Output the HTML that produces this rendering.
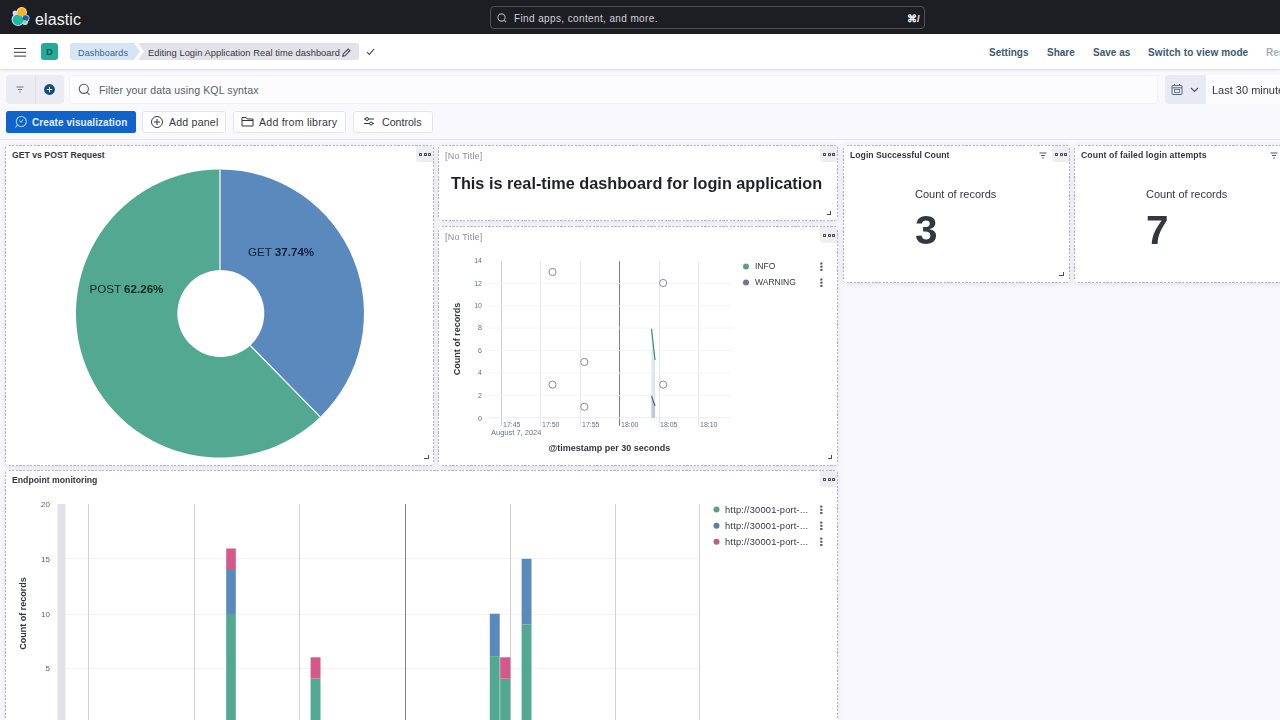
<!DOCTYPE html>
<html><head><meta charset="utf-8">
<style>
*{box-sizing:border-box;margin:0;padding:0}
html,body{width:1280px;height:720px;overflow:hidden;background:#f9f8fd;font-family:"Liberation Sans",sans-serif;color:#343741}
.abs{position:absolute;white-space:nowrap}
#top{position:absolute;left:0;top:0;width:1280px;height:34px;background:#1d1e24}
#nav{position:absolute;left:0;top:34px;width:1280px;height:35px;background:#fff;box-shadow:0 1px 2px rgba(60,60,90,.18)}
.navlink{position:absolute;top:1px;line-height:35px;font-size:10px;font-weight:bold;color:#3a5a72}
.btn{position:absolute;top:111px;height:22px;border:1px solid #e3e5ec;background:#fff;border-radius:3px;font-size:10.6px;line-height:20px;color:#343741}
.panel{position:absolute;background-color:#fff;border:1px solid transparent;border-radius:4px;box-shadow:0 1px 5px rgba(70,65,130,.13);
background-image:repeating-linear-gradient(90deg,#b5b4c5 0 2.2px,transparent 2.2px 3.6px),repeating-linear-gradient(90deg,#b5b4c5 0 2.2px,transparent 2.2px 3.6px),repeating-linear-gradient(0deg,#b5b4c5 0 2.2px,transparent 2.2px 3.6px),repeating-linear-gradient(0deg,#b5b4c5 0 2.2px,transparent 2.2px 3.6px);
background-size:100% 1px,100% 1px,1px 100%,1px 100%;background-position:left top,left bottom,left top,right top;background-repeat:no-repeat;background-origin:border-box;background-clip:border-box}
.ptitle{position:absolute;left:6px;top:2.5px;font-size:8.7px;line-height:12px;font-weight:bold;color:#343741}
.notitle{position:absolute;left:6px;top:4px;font-size:9px;letter-spacing:.2px;line-height:12px;color:#8a8e96}
.dots{position:absolute;width:17px;height:16px;background:#eeeef2;border-radius:0 3px 0 3px}
.dots i{position:absolute;top:6.7px;width:3px;height:3px;border:1px solid #4a4e58;border-radius:.6px}
.rsz{position:absolute;width:4.5px;height:4px;border-right:1.2px solid #4a4e58;border-bottom:1.2px solid #4a4e58}
svg text{font-family:"Liberation Sans",sans-serif}
</style></head><body>
<div id="top">
  <svg class="abs" style="left:10px;top:6px" width="22" height="22" viewBox="0 0 22 22">
    <circle cx="8" cy="13.5" r="6.4" fill="#cfeff0"/>
    <circle cx="11.7" cy="6.3" r="5.2" fill="#f6e7b0"/>
    <circle cx="15.7" cy="12.2" r="3.8" fill="#bcd6f0"/>
    <circle cx="15" cy="16" r="3" fill="#cdeedd"/>
    <circle cx="5.2" cy="7" r="2.6" fill="#e6d3ea"/>
    <circle cx="8" cy="13.8" r="5.4" fill="#20b6a8"/>
    <circle cx="11.7" cy="6.3" r="4.3" fill="#f3b61f"/>
    <circle cx="15.7" cy="12.2" r="2.9" fill="#1f5fa6"/>
    <circle cx="15" cy="16" r="2" fill="#8fd4a6"/>
  </svg>
  <div class="abs" style="left:35px;top:10.5px;font-size:16px;line-height:18px;color:#f4f4f6;letter-spacing:0.1px">elastic</div>
  <div class="abs" style="left:490px;top:6px;width:435px;height:23px;border:1px solid #4d4f58;border-radius:4px;background:#1d1e24">
    <svg class="abs" style="left:5px;top:5px" width="12" height="12" viewBox="0 0 12 12"><circle cx="5.5" cy="5.5" r="3.6" fill="none" stroke="#a7a9b1" stroke-width="1.1"/><path d="M8 8 10 10.2" stroke="#a7a9b1" stroke-width="1.1"/></svg>
    <div class="abs" style="left:23px;top:6px;font-size:10px;line-height:12px;letter-spacing:.38px;color:#d2d3d8">Find apps, content, and more.</div>
    <div class="abs" style="left:416px;top:6px;font-size:9.5px;line-height:12px;color:#fff;font-weight:bold">&#8984;/</div>
  </div>
</div>
<div id="nav">
  <div class="abs" style="left:14px;top:13.6px;width:12px;height:1.3px;background:#343741;box-shadow:0 3.8px 0 #343741,0 7.6px 0 #343741"></div>
  <div class="abs" style="left:41px;top:9px;width:17px;height:17px;background:#21ab99;border-radius:3px;font-size:9px;font-weight:bold;line-height:18px;text-align:center;color:#0d4a4a">D</div>
  <svg class="abs" style="left:70px;top:9px" width="290" height="17" viewBox="0 0 290 17">
    <path d="M3 0H64L70 8.5 64 17H3Q0 17 0 14V3Q0 0 3 0Z" fill="#d6e5f5"/>
    <path d="M68 0H286Q289 0 289 3V14Q289 17 286 17H68L74 8.5Z" fill="#e2e2e8"/>
  </svg>
  <div class="abs" style="left:78px;top:13.5px;font-size:9px;line-height:11px;letter-spacing:.15px;color:#2e6491">Dashboards</div>
  <div class="abs" style="left:148px;top:13.5px;font-size:9.3px;line-height:11px;letter-spacing:.05px;color:#343741">Editing Login Application Real time dashboard</div>
  <svg class="abs" style="left:341.5px;top:47.5px;position:fixed" width="9" height="9" viewBox="0 0 9 9"><path d="M0.8 8.2 1.3 5.9 6.2 1 8 2.8 3.1 7.7Z" fill="none" stroke="#535966" stroke-width="1.2"/><path d="M5 2.2 6.8 4" stroke="#535966" stroke-width="1"/></svg>
  <svg class="abs" style="left:366px;top:14px" width="9" height="8" viewBox="0 0 9 8"><path d="M1 4 3.3 6.5 8 1" fill="none" stroke="#343741" stroke-width="1.1"/></svg>
  <div class="navlink" style="left:989px">Settings</div>
  <div class="navlink" style="left:1047px">Share</div>
  <div class="navlink" style="left:1093px">Save as</div>
  <div class="navlink" style="left:1148px;letter-spacing:.1px">Switch to view mode</div>
  <div class="navlink" style="left:1266px;color:#a9adb5">Res</div>
</div>
<!-- filter bar -->
<div class="abs" style="left:6px;top:75px;width:58px;height:29px;background:#ebecf3;border-radius:3px"></div>
<div class="abs" style="left:35px;top:75px;width:1px;height:29px;background:#e0e2ea"></div>
<svg class="abs" style="left:15px;top:86px" width="10" height="7" viewBox="0 0 10 7"><path d="M1.5 1H8.5M3 3.5H7M4.3 6H5.7" stroke="#69707d" stroke-width="1"/></svg>
<svg class="abs" style="left:43px;top:83px" width="13" height="13" viewBox="0 0 13 13"><circle cx="6.5" cy="6.5" r="5.4" fill="#124b82"/><path d="M6.5 3.8V9.2M3.8 6.5H9.2" stroke="#e8f0ff" stroke-width="1.1"/></svg>
<div class="abs" style="left:69px;top:75px;width:1089px;height:29px;background:#fcfbfe;border:1px solid #f2f1f7;border-radius:3px"></div>
<svg class="abs" style="left:78px;top:83px" width="13" height="13" viewBox="0 0 13 13"><circle cx="5.8" cy="5.8" r="4.6" fill="none" stroke="#535966" stroke-width="1.1"/><path d="M9 9.2 11.5 11.8" stroke="#535966" stroke-width="1.1"/></svg>
<div class="abs" style="left:99px;top:84px;font-size:10.6px;line-height:12px;letter-spacing:.1px;color:#5a5f6b">Filter your data using KQL syntax</div>
<div class="abs" style="left:1165px;top:75px;width:41px;height:29px;background:#e9e9f3;border-radius:4px 0 0 4px"></div>
<svg class="abs" style="left:1171px;top:84px" width="12" height="11" viewBox="0 0 12 11"><rect x="1" y="1.5" width="10" height="9" rx="1" fill="none" stroke="#4a6a8a" stroke-width="1"/><path d="M1 3.8H11M3.5 0V2M8.5 0V2" stroke="#4a6a8a" stroke-width="1"/><rect x="3.5" y="5.5" width="5" height="3" fill="none" stroke="#4a6a8a" stroke-width=".8"/></svg>
<svg class="abs" style="left:1190px;top:87px" width="9" height="6" viewBox="0 0 9 6"><path d="M1 1 4.5 4.5 8 1" fill="none" stroke="#4e5564" stroke-width="1.2"/></svg>
<div class="abs" style="left:1206px;top:75px;width:74px;height:29px;background:#fcfbfe"></div>
<div class="abs" style="left:1212px;top:84px;font-size:11px;line-height:12px;color:#343741">Last 30 minutes</div>
<!-- buttons -->
<div class="abs" style="left:6px;top:111px;width:130px;height:22px;background:#1063c8;border-radius:2.5px;color:#e3efff;font-size:10px;font-weight:bold;line-height:23px;letter-spacing:.07px;padding-left:26px">Create visualization</div>
<svg class="abs" style="left:14px;top:115px" width="14" height="14" viewBox="0 0 14 14"><circle cx="7.3" cy="6.5" r="5" fill="none" stroke="#a9d2ff" stroke-width="1.1"/><path d="M3.5 10 1.5 12.5" stroke="#a9d2ff" stroke-width="1.1"/><path d="M5.5 5.5 7 7.5 9 4.5" fill="none" stroke="#a9d2ff" stroke-width="1"/></svg>
<div class="btn" style="left:142px;width:84px;padding-left:26px;letter-spacing:.2px">Add panel</div>
<svg class="abs" style="left:150px;top:115px" width="14" height="14" viewBox="0 0 14 14"><circle cx="7" cy="7" r="5.5" fill="none" stroke="#343741" stroke-width="1"/><path d="M7 4V10M4 7H10" stroke="#343741" stroke-width="1"/></svg>
<div class="btn" style="left:233px;width:113px;padding-left:25px;letter-spacing:.22px">Add from library</div>
<svg class="abs" style="left:241px;top:116px" width="13" height="11" viewBox="0 0 13 11"><path d="M1 1.5H5L6.2 3H12V10H1Z" fill="none" stroke="#343741" stroke-width="1"/><path d="M1 4.5H12" stroke="#343741" stroke-width="1"/></svg>
<div class="btn" style="left:353px;width:80px;padding-left:28px">Controls</div>
<svg class="abs" style="left:363px;top:116px" width="12" height="11" viewBox="0 0 12 11"><path d="M1 3H11M1 7.5H11" stroke="#343741" stroke-width="1"/><circle cx="4" cy="3" r="1.5" fill="#fff" stroke="#343741"/><circle cx="8" cy="7.5" r="1.5" fill="#fff" stroke="#343741"/></svg>
<div class="abs" style="left:0;top:139px;width:1280px;height:1px;background:#e4e2ee"></div>

<!-- panel 1 -->
<div class="panel" style="left:5px;top:145px;width:429px;height:321px">
  <div class="ptitle">GET vs POST Request</div>
  <div class="dots" style="right:0;top:0"><i style="left:3px"></i><i style="left:7.5px"></i><i style="left:12px"></i></div>
  <div class="rsz" style="left:418px;top:309px"></div>
</div>
<svg class="abs" style="left:0;top:140px" width="440" height="330" viewBox="0 140 440 330">
  <path d="M220 169.5A144 144 0 0 1 320.2 416.9L250.3 345.5A43.5 43.5 0 0 0 220 270Z" fill="#5a89bd"/>
  <path d="M320.2 416.9A144 144 0 1 1 220 169.5V270A43.5 43.5 0 1 0 250.3 345.5Z" fill="#52a891"/>
  <path d="M220 169.5V270M250.3 345.5 320.2 416.9" stroke="#fff" stroke-width="1.2"/>
  <text x="248" y="256" font-size="11.6" fill="#14213a">GET <tspan font-weight="bold">37.74%</tspan></text>
  <text x="89.5" y="293" font-size="11.6" fill="#0e2a22">POST <tspan font-weight="bold">62.26%</tspan></text>
</svg>

<!-- panel 2 -->
<div class="panel" style="left:438px;top:145px;width:400px;height:76px">
  <div class="notitle">[No Title]</div>
  <div class="dots" style="right:0;top:0"><i style="left:3px"></i><i style="left:7.5px"></i><i style="left:12px"></i></div>
  <div class="abs" style="left:12px;top:28px;font-size:16.25px;line-height:18px;font-weight:bold;color:#1f2126">This is real-time dashboard for login application</div>
  <div class="rsz" style="left:387.5px;top:65px"></div>
</div>
<!-- panel 3 -->
<div class="panel" style="left:438px;top:226px;width:400px;height:240px">
  <div class="notitle">[No Title]</div>
  <div class="dots" style="right:0;top:0"><i style="left:3px"></i><i style="left:7.5px"></i><i style="left:12px"></i></div>
  <div class="rsz" style="left:388.5px;top:228px"></div>
</div>
<svg class="abs" style="left:440px;top:240px" width="396" height="222" viewBox="440 240 396 222">
  <g stroke="#e6e6ea" stroke-width="1">
    <path d="M540.5 261V426M580.5 261V426M659.5 261V426M698.5 261V426"/></g><path d="M501.5 261V426" stroke="#cbcbd0"/><g>
  </g>
  <path d="M619.5 261V426" stroke="#7d7f86" stroke-width="1"/>
  <path d="M489 395.5H731M489 373H731M489 350.5H731M489 328H731M489 306H731M489 283.5H731" stroke="#f4f4f7" stroke-width="1"/><path d="M489 417.8H731" stroke="#ececf0" stroke-width="1"/>
  <g font-size="7" fill="#69707d" text-anchor="end">
    <text x="482" y="263">14</text><text x="482" y="285.5">12</text><text x="482" y="308">10</text><text x="482" y="330.3">8</text>
    <text x="482" y="352.7">6</text><text x="482" y="375">4</text><text x="482" y="398">2</text><text x="482" y="420.5">0</text>
  </g>
  <g font-size="7" fill="#69707d">
    <text x="503" y="427">17:45</text><text x="542" y="427">17:50</text><text x="582" y="427">17:55</text>
    <text x="621" y="427">18:00</text><text x="660" y="427">18:05</text><text x="700" y="427">18:10</text>
    <text x="491" y="434.5" font-size="7.5">August 7, 2024</text>
  </g>
  <text x="548.5" y="450.5" font-size="9" font-weight="bold" fill="#343741">@timestamp per 30 seconds</text>
  <text transform="translate(459.5 339) rotate(-90)" text-anchor="middle" font-size="9" font-weight="bold" fill="#343741">Count of records</text>
  <path d="M651.5 328.7 655 360 655 417.8 651.5 417.8Z" fill="#d5ecea"/>
  <path d="M651.5 328.7 655 360" stroke="#3f8a7a" stroke-width="1.2"/>
  <path d="M651.5 396 655 408 655 417.8 651.5 417.8Z" fill="#bcc8dc"/>
  <path d="M651.5 396 655 406" stroke="#4a6a8a" stroke-width="1.2"/>
  <g fill="#fff" stroke="#8a8c92" stroke-width="1">
    <circle cx="552.5" cy="272" r="3.6"/><circle cx="552.5" cy="384.6" r="3.6"/>
    <circle cx="584.3" cy="362" r="3.6"/><circle cx="584.3" cy="406.8" r="3.6"/>
    <circle cx="663.2" cy="283" r="3.6"/><circle cx="663.2" cy="384.6" r="3.6"/>
  </g>
  <circle cx="746" cy="266.5" r="3" fill="#5e9e86"/>
  <circle cx="746" cy="282.5" r="3" fill="#6e70a6"/>
  <g font-size="8.5" fill="#343741"><text x="755" y="268.8">INFO</text><text x="755" y="284.8">WARNING</text></g>
  <g fill="#535966"><rect x="820.3" y="262.5" width="2.2" height="2"/><rect x="820.3" y="265.7" width="2.2" height="2"/><rect x="820.3" y="268.9" width="2.2" height="2"/>
  <rect x="820.3" y="278.5" width="2.2" height="2"/><rect x="820.3" y="281.7" width="2.2" height="2"/><rect x="820.3" y="284.9" width="2.2" height="2"/></g>
</svg>

<!-- panel 4 -->
<div class="panel" style="left:843px;top:145px;width:227px;height:138px">
  <div class="ptitle">Login Successful Count</div>
  <svg class="abs" style="left:195px;top:6px" width="8" height="7" viewBox="0 0 8 7"><path d="M0.5 1H7.5M2 3.5H6M3.2 6H4.8" stroke="#535966" stroke-width="1"/></svg>
  <div class="dots" style="right:0;top:0"><i style="left:3px"></i><i style="left:7.5px"></i><i style="left:12px"></i></div>
  <div class="abs" style="left:71px;top:41.5px;font-size:11px;line-height:13px;color:#343741">Count of records</div>
  <div class="abs" style="left:71px;top:64px;font-size:40.5px;line-height:40px;font-weight:bold;color:#343741">3</div>
  <div class="rsz" style="left:215px;top:126px"></div>
</div>
<!-- panel 5 -->
<div class="panel" style="left:1074px;top:145px;width:230px;height:138px">
  <div class="ptitle" style="letter-spacing:.1px">Count of failed login attempts</div>
  <svg class="abs" style="left:195px;top:6px" width="8" height="7" viewBox="0 0 8 7"><path d="M0.5 1H7.5M2 3.5H6M3.2 6H4.8" stroke="#535966" stroke-width="1"/></svg>
  <div class="abs" style="left:71px;top:41.5px;font-size:11px;line-height:13px;color:#343741">Count of records</div>
  <div class="abs" style="left:71px;top:64px;font-size:40.5px;line-height:40px;font-weight:bold;color:#343741">7</div>
</div>
<!-- panel 6 -->
<div class="panel" style="left:5px;top:470px;width:833px;height:270px">
  <div class="ptitle">Endpoint monitoring</div>
  <div class="dots" style="right:0;top:0"><i style="left:3px"></i><i style="left:7.5px"></i><i style="left:12px"></i></div>
</div>
<svg class="abs" style="left:6px;top:490px" width="830" height="230" viewBox="6 490 830 230">
  <rect x="57.5" y="504" width="8" height="230" fill="#e2e1e8"/><path d="M66 558.5H700M66 614.5H700M66 668.5H700" stroke="#f3f3f6" stroke-width="1"/>
  <g stroke="#d2d2d8" stroke-width="1"><path d="M88.5 504V730M194.5 504V730M299.5 504V730M510.5 504V730M615.5 504V730M699.5 504V730"/></g>
  <path d="M405.5 504V730" stroke="#808289" stroke-width="1"/>
  <g font-size="8" fill="#5a606c" text-anchor="end"><text x="50" y="507">20</text><text x="50" y="561.5">15</text><text x="50" y="616.5">10</text><text x="50" y="671">5</text></g>
  <text transform="translate(26 613.5) rotate(-90)" text-anchor="middle" font-size="9" font-weight="bold" fill="#343741">Count of records</text>
  <g>
    <rect x="226.2" y="614" width="9.6" height="110" fill="#52a891"/><rect x="226.2" y="570" width="9.6" height="44" fill="#5a89bd"/><rect x="226.2" y="548.5" width="9.6" height="21.5" fill="#d2598a"/>
    <rect x="310.6" y="678.5" width="9.9" height="50" fill="#52a891"/><rect x="310.6" y="657.3" width="9.9" height="21.2" fill="#d2598a"/>
    <rect x="489.8" y="656.2" width="9.9" height="70" fill="#52a891"/><rect x="489.8" y="613.7" width="9.9" height="42.5" fill="#5a89bd"/>
    <rect x="500.2" y="678.7" width="10.2" height="50" fill="#52a891"/><rect x="500.2" y="657.3" width="10.2" height="21.4" fill="#d2598a"/>
    <rect x="521.6" y="624.4" width="9.9" height="100" fill="#52a891"/><rect x="521.6" y="558.8" width="9.9" height="65.6" fill="#5a89bd"/>
  </g>
  <circle cx="716.5" cy="509.6" r="3" fill="#5e9e86"/><circle cx="716.5" cy="525.8" r="3" fill="#5d7ea8"/><circle cx="716.5" cy="541.8" r="3" fill="#c0607f"/>
  <g font-size="9.3" fill="#343741" letter-spacing=".2"><text x="725" y="512.8">http://30001-port-...</text><text x="725" y="529">http://30001-port-...</text><text x="725" y="545">http://30001-port-...</text></g>
  <g fill="#535966">
    <rect x="820.2" y="505.6" width="2.2" height="2"/><rect x="820.2" y="508.8" width="2.2" height="2"/><rect x="820.2" y="512" width="2.2" height="2"/>
    <rect x="820.2" y="521.6" width="2.2" height="2"/><rect x="820.2" y="524.8" width="2.2" height="2"/><rect x="820.2" y="528" width="2.2" height="2"/>
    <rect x="820.2" y="537.6" width="2.2" height="2"/><rect x="820.2" y="540.8" width="2.2" height="2"/><rect x="820.2" y="544" width="2.2" height="2"/>
  </g>
</svg>
</body></html>
